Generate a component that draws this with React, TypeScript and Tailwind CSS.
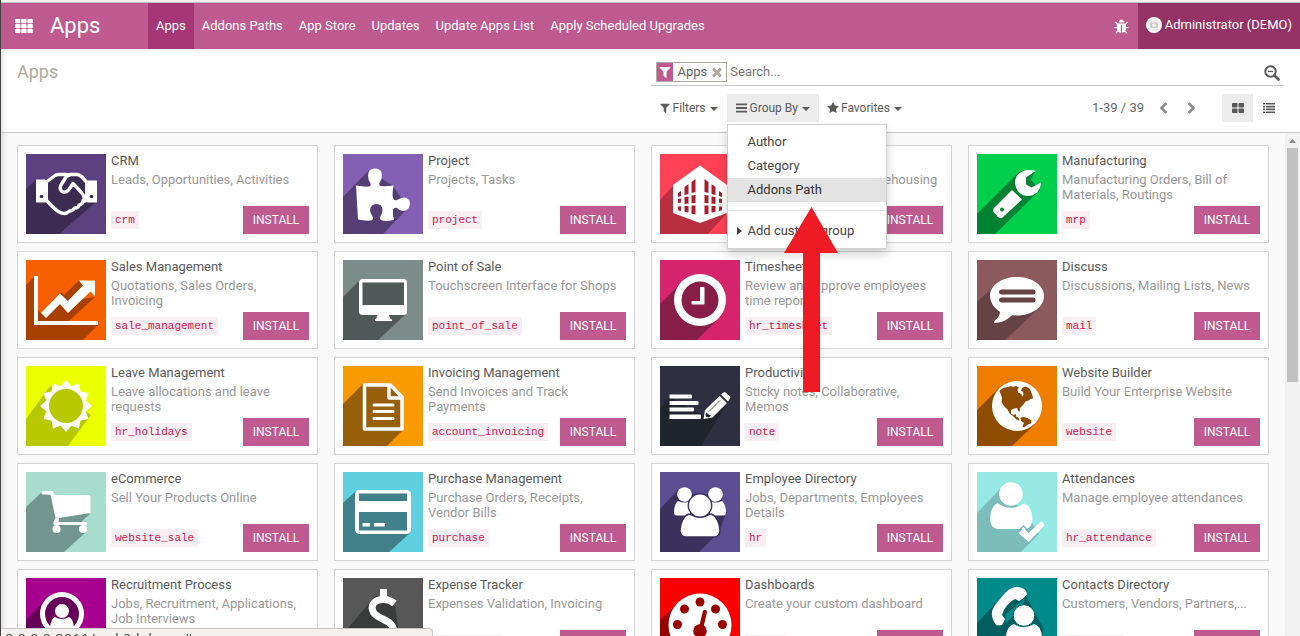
import React from "react";

type Art = { bg: string; dark: string; shadow: string; draw: (dark: string) => React.ReactNode };

const sunPoints = Array.from({ length: 24 }, (_, i) => {
  const r = i % 2 === 0 ? 26 : 20.5;
  const a = (i * Math.PI) / 12 - Math.PI / 2;
  return `${(40 + r * Math.cos(a)).toFixed(2)},${(40 + r * Math.sin(a)).toFixed(2)}`;
}).join(" ");

const art: Record<string, Art> = {
  crm: {
    bg: "#5c4080",
    dark: "#3c2c52",
    shadow: "0,35 11,25 22,26 31,20 54,20 70,48 33,80 0,80",
    draw: (d) => (
      <>
        <path d="M10 25.5h9l3 1v21l-3 1h-9zM71 26.5h-9l-3 1v20l3 1h9z" />
        <g fill="none" stroke="#fff" strokeWidth="3.4" strokeLinejoin="round" strokeLinecap="round">
          <path d="M21 27.500 28.500 22q1.500-1.500 4-1.500h7q2 0 3 1M21 47l5.500 5.500Q33 59.500 38 59.500q3 0 5.500-2.500 3.500 0 5-3 4 0 4.500-3 4-.5 4-4.500" />
          <path d="M60 27.500 55.500 22.500q-2-2-4.500-2h-6q-3 0-5 2.500l-5 8q-2 4 1 6.500 4 2 7-2l4-6q5 5 10 11 1.500 2.500 1 6.500L60 46.500" />
        </g>
        <circle cx="15.500" cy="42.500" r="1.800" fill={d} />
        <circle cx="65.500" cy="42.500" r="1.800" fill={d} />
      </>
    ),
  },
  project: {
    bg: "#8460b5",
    dark: "#553e73",
    shadow: "0,43 26,16 50,32 65,54 40,80 0,80",
    draw: () => (
      <path d="M13 31.500q8 1.500 13 1 2.500-.5 1.500-3-2.500-4-2.500-8 0-7 7-7t7 7q0 4-2.500 7.500-1 2.500 1.500 3 5 .5 12.500-.5-1.500 8-.5 12.500 1 3 4 2 3.500-2.500 7-2.500 6 .5 6 6.500-1 7-7 7-3.500 0-6-3-3-1-4 1.500-.5 5 1 10.500-8 1.500-12 .5-3-1-1.500-4.500 2-3 2-6 0-6-6-6t-6.500 6q0 3 2.500 6.500 1.500 3-1.500 4-6 .5-13-1z" />
    ),
  },
  stock: {
    bg: "#ff4156",
    dark: "#b8303f",
    shadow: "0,46 13,32 40,12 67,59 48,80 0,80",
    draw: () => (
      <>
        <path d="M40 11.500 67 31v28L40 69 13 59V31z" />
        <g fill="#a81c30">
          <path d="M18 39l3-2v5l-3 1zM24.500 33l4-3v10l-4 1zM31.500 28l4-3v13l-4 1z" />
          <path d="M18 45l3-.5v4l-3 .5zM24.500 43l4-.5v7l-4 .5zM31.500 41.500l4-.5v8l-4 .3z" />
          <path d="M18 52.500h3v4.500l-3-.8zM24.500 52h4v6.500l-4-.8zM31.500 51.500h4v9l-4-.8z" />
          <path d="M62 39l-3-2v5l3 1zM55.500 33l-4-3v10l4 1zM48.500 28l-4-3v13l4 1z" />
          <path d="M62 45l-3-.5v4l3 .5zM55.500 43l-4-.5v7l4 .5zM48.500 41.500l-4-.5v8l4 .3z" />
          <path d="M62 52.500h-3v4.500l3-.8zM55.500 52h-4v6.500l4-.8zM48.500 51.500h-4v9l4-.8z" />
        </g>
      </>
    ),
  },
  mrp: {
    bg: "#00cf4c",
    dark: "#008333",
    shadow: "0,60 42,18 50,16 58,17 54,26 63,36 18,80 0,80",
    draw: (d) => (
      <>
        <path d="M58.500 17q-4-1.500-9-1Q37.500 19 38 29.500q1.500 11 12 12.500 12.500 0 14-13.500L54.500 33.500 49 30.500V23.500z" />
        <path d="M35 36l10 9.500L25.500 63.500q-2.500 1.500-4.500-.5L17 58.500q-2-2 0-4.500z" />
        <circle cx="25" cy="55.500" r="2" fill={d} />
      </>
    ),
  },
  sale: {
    bg: "#f76000",
    dark: "#a84000",
    shadow: "0,25 8,17 12,17 12,61 72,65 57,80 0,80",
    draw: (d) => (
      <>
        <path fill={d} d="M12 50l3 3 19-19.500L53 20.500l4 5L42 41l27-4-26 24H12z" />
        <path fill="#f76000" d="M12 17v33l22-20 4 5 15-14.500V16z" />
        <path d="M8 16h4v45h60v4H8z" />
        <path d="M15 53l19-19.500 8 7.500L57 25.500l-4-5h16V36l-4.500-4.500L42 53l-8-9-14 14z" />
      </>
    ),
  },
  pos: {
    bg: "#7c8c8b",
    dark: "#4f5958",
    shadow: "0,37 17,20 63,54 35,80 0,80",
    draw: (d) => (
      <>
        <rect x="16" y="19" width="48" height="36" rx="3.500" />
        <rect x="19.500" y="22.500" width="41.500" height="22.500" fill={d} />
        <path d="M34 55h12l1 3.500 2 1V61H32v-1.500l1.500-1z" />
      </>
    ),
  },
  timesheet: {
    bg: "#d6246c",
    dark: "#871e48",
    shadow: "0,44 22,22 59,58 37,80 0,80",
    draw: (d) => (
      <>
        <circle cx="40" cy="40" r="26" />
        <circle cx="40" cy="40" r="18.500" fill={d} />
        <path d="M41 27h2.500q1 0 1 1v15.500q0 1-1 1H32.500q-1 0-1-1V42q0-1 1-1H40V28q0-1 1-1z" />
      </>
    ),
  },
  discuss: {
    bg: "#8c5a5c",
    dark: "#654243",
    shadow: "0,42 17,26 62,48 28,80 0,80",
    draw: (d) => (
      <>
        <path d="M40 17c15 0 27 8 27 19S55 55.500 40 55.500l-5-.3Q29 62 18 63q-2-.5 0-2.500 5-4 5-8.500Q13 45 13 36c0-11 12-19 27-19z" />
        <rect x="22" y="29.500" width="36.500" height="5" rx="2.500" fill={d} />
        <rect x="22" y="37.500" width="36.500" height="5" rx="2.500" fill={d} />
      </>
    ),
  },
  leave: {
    bg: "#ecff00",
    dark: "#b8c800",
    shadow: "0,53 24,20 65,49 42,80 0,80",
    draw: (d) => (
      <>
        <polygon points={sunPoints} />
        <circle cx="40" cy="40" r="17" fill={d} />
      </>
    ),
  },
  invoice: {
    bg: "#f99b00",
    dark: "#985f0b",
    shadow: "0,38 20,18 48,18 60,30 60,64 44,80 0,80",
    draw: () => (
      <g fill="none" stroke="#fff" strokeWidth="3.500" strokeLinejoin="round">
        <path d="M21.500 19h26L59 31v32H21.500zM46 19v13h13" />
        <path d="M31 39h19M31 45.500h19M31 52.500h19" strokeWidth="3" strokeLinecap="round" />
      </g>
    ),
  },
  note: {
    bg: "#2f2f42",
    dark: "#20242c",
    shadow: "0,42 10,31 44,50 70,33 41,80 0,80",
    draw: (d) => (
      <>
        <path d="M9.500 28.500H31q1 0 1 1v2q0 1-1 1H9.500zM9.500 35h28q1 0 1 1v2q0 1-1 1h-28zM9.500 41.500H33q1 0 1 1v2q0 1-1 1H9.500zM9.500 48.500H40q1 0 1 1V52q0 1-1 1H9.500z" />
        <path d="M43.500 53l1.500-9 14.500-14 7.500 7-14.500 14.500zM61 28.500l2.500-2q1-.8 2 0l4.500 4q1 1 0 2l-2 3z" />
        <path d="M49 45.500L60 34.500" stroke={d} strokeWidth=".8" />
        <path d="M46.500 46.500l2 2 2.500 1-2.500 2-2.500-1-.5-2z" fill={d} />
      </>
    ),
  },
  website: {
    bg: "#ef7d00",
    dark: "#8e4c00",
    shadow: "0,44 22,22 58,58 35,80 0,80",
    draw: (d) => (
      <>
        <circle cx="40" cy="40" r="25" />
        <path
          fill={d}
          d="M22.500 25l3.500-3 5-1 3-1 2 1 3-1 3 1.500-1.500 2 .5 3 3.500 1.500.5 2.500 1.500-1.500-.5-3-2-1.500 1-2.500 3-1.500 4 1.500 2 3.500 1.500 4 .5 3-2.500.5-2 1.500-3 1-2 3-3.500 3.500-.5 4-1.500-1.500-1-2.500-3 .5-3 1.500 0 3.500 2.500 1.500 2.500-1 0 2.500 2.500 1 1 3-3-1-3.500-3.500-3.500-2.500-2-4-3.500-3.500-2.500-4 .5-4.500z"
        />
        <path fill={d} d="M43.500 51.500l3-.5 4 1 4 2.500-.5 3-3 1-4 3-1.500-1 1.500-3.500-3-2z" />
      </>
    ),
  },
  cart: {
    bg: "#a8dccf",
    dark: "#739790",
    shadow: "0,35 16,20 26,24 64,42 56,49 60,60 38,80 0,80",
    draw: () => (
      <>
        <path d="M17 19h9q1.500 0 1.500 1.500L28 23h35q1.500 0 1.500 1.500V41L33 46l-.5 4h27q1.500 0 1.500 1.800T59.500 53H29q-2 0-1.500-3l2-4L24.500 22.500H17q-1.500 0-1.500-1.700T17 19z" />
        <circle cx="30.500" cy="57" r="4" />
        <circle cx="57" cy="57" r="4" />
      </>
    ),
  },
  purchase: {
    bg: "#60cfdf",
    dark: "#418089",
    shadow: "0,31 13,19 67,61 46,80 0,80",
    draw: (d) => (
      <>
        <rect x="12" y="18" width="56" height="44" rx="4.500" />
        <rect x="16" y="21.500" width="48" height="7.500" fill={d} />
        <rect x="16" y="40" width="48" height="18.500" fill={d} />
        <rect x="19.500" y="51" width="7.500" height="3.500" />
        <rect x="31" y="51" width="11" height="3.500" />
      </>
    ),
  },
  employees: {
    bg: "#5a4d91",
    dark: "#3a325d",
    shadow: "0,37 19,17 40,24 60,19 65,44 59,60 39,80 0,80",
    draw: (d) => (
      <>
        <circle cx="24.500" cy="22.500" r="7.300" />
        <circle cx="55.500" cy="22.500" r="7.300" />
        <path d="M18 29q6.500 3 12 0v14.500H16.500q-3-.5-2.500-4 .5-8 4-10.500zM62 29q-6.500 3-12 0v14.500h13.500q3-.5 2.500-4-.5-8-4-10.500z" />
        <g stroke={d} strokeWidth="1.400">
          <path d="M29 42q11 6 22 0 8 2.500 9 17-.5 6-6 6H26q-5.500 0-6-6 1-14.500 9-17z" />
          <circle cx="40" cy="33.500" r="11.700" />
        </g>
      </>
    ),
  },
  attendance: {
    bg: "#96e8e4",
    dark: "#7cbdbb",
    shadow: "0,41 24,16 52,46 62,62 44,80 0,80",
    draw: (d) => (
      <>
        <circle cx="34" cy="22" r="11.800" />
        <path d="M21 31.500Q34 40 47 31.500q8 2.500 8.500 16-.5 9-7.500 9.500H21q-7-.5-8-9 .5-14 8-17z" />
        <path d="M40.500 60l6-6 5 5 5-5" fill="none" stroke={d} strokeWidth="1.500" />
        <path d="M41.500 61l5-5 5 5L63.500 50q1-.8 2 0l1.500 2q.8 1 0 2L51.500 70z" />
      </>
    ),
  },
  recruit: {
    bg: "#a8008e",
    dark: "#660057",
    shadow: "0,42 20,21 60,60 40,80 0,80",
    draw: (d) => (
      <>
        <circle cx="36" cy="36" r="22" />
        <circle cx="36" cy="36" r="17" fill={d} />
        <circle cx="36" cy="33" r="7" />
        <path d="M29 39q7 4 14 0 4 1.500 5 10-12 8-24 0 1-8.500 5-10z" />
      </>
    ),
  },
  expense: {
    bg: "#575757",
    dark: "#3a3c3b",
    shadow: "0,56 33,17 52,28 57,62 40,80 0,80",
    draw: () => (
      <g fill="none" stroke="#fff" strokeWidth="7">
        <path d="M51.500 25.500Q46 21 40 21.500c-8 0-12 5-10.500 10.500C31 39 40 40 46 44.500c7 5.500 6 16-4 17-7 .5-12-2-15-5" />
        <path d="M40.500 11v10M40.500 61v8" />
      </g>
    ),
  },
  dashboard: {
    bg: "#f80000",
    dark: "#990000",
    shadow: "0,42 18,25 62,69 50,80 0,80",
    draw: (d) => (
      <>
        <circle cx="40" cy="47" r="31.500" />
        <g fill={d}>
          <circle cx="40" cy="24" r="4.500" />
          <circle cx="24.500" cy="31" r="4.500" />
          <circle cx="55.500" cy="31" r="4.500" />
          <circle cx="17.500" cy="46.500" r="4.500" />
          <circle cx="62.500" cy="46.500" r="4.500" />
          <circle cx="40" cy="53" r="6.800" />
          <path d="M43 33q.5-1.500 2.500-1 1.500.5 1.500 2L42.500 53H38z" />
        </g>
      </>
    ),
  },
  contacts: {
    bg: "#008b8a",
    dark: "#005e5e",
    shadow: "0,45 19,25 48,16 66,50 66,80 0,80",
    draw: (d) => (
      <>
        <path d="M28 37L48 20l-2 8-17 17z" fill="#008b8a" />
        <path d="M50 16.500L49 13q-3-4-9-4Q33 9.500 28 15L18 27q-4 6-3 11 1 6 5 9.500l5-.5q2-3 3-6l-3-4q1-5 5-9.500 4-5 8-6.500l4 2q4-1.500 8-6.500z" />
        <circle cx="47" cy="37.500" r="10.800" stroke={d} strokeWidth="1" />
        <path d="M37 46q10 6.500 20 0 7 2 8 12v22H29V58q1-10 8-12z" />
      </>
    ),
  },
};

const apps: [string, string, string, string][] = [
  ["crm", "CRM", "Leads, Opportunities, Activities", "crm"],
  ["project", "Project", "Projects, Tasks", "project"],
  ["stock", "Inventory Management", "Inventory, Logistics, Warehousing", "stock"],
  ["mrp", "Manufacturing", "Manufacturing Orders, Bill of Materials, Routings", "mrp"],
  ["sale", "Sales Management", "Quotations, Sales Orders, Invoicing", "sale_management"],
  ["pos", "Point of Sale", "Touchscreen Interface for Shops", "point_of_sale"],
  ["timesheet", "Timesheets", "Review and approve employees time reports", "hr_timesheet"],
  ["discuss", "Discuss", "Discussions, Mailing Lists, News", "mail"],
  ["leave", "Leave Management", "Leave allocations and leave requests", "hr_holidays"],
  ["invoice", "Invoicing Management", "Send Invoices and Track Payments", "account_invoicing"],
  ["note", "Productivity", "Sticky notes, Collaborative, Memos", "note"],
  ["website", "Website Builder", "Build Your Enterprise Website", "website"],
  ["cart", "eCommerce", "Sell Your Products Online", "website_sale"],
  ["purchase", "Purchase Management", "Purchase Orders, Receipts, Vendor Bills", "purchase"],
  ["employees", "Employee Directory", "Jobs, Departments, Employees Details", "hr"],
  ["attendance", "Attendances", "Manage employee attendances", "hr_attendance"],
  ["recruit", "Recruitment Process", "Jobs, Recruitment, Applications, Job Interviews", "hr_recruitment"],
  ["expense", "Expense Tracker", "Expenses Validation, Invoicing", "hr_expense"],
  ["dashboard", "Dashboards", "Create your custom dashboard", "board"],
  ["contacts", "Contacts Directory", "Customers, Vendors, Partners,...", "contacts"],
];

function AppIcon({ name }: { name: string }) {
  const a = art[name];
  return (
    <svg viewBox="0 0 80 80" className="size-20 shrink-0" fill="#fff" aria-hidden="true">
      <rect width="80" height="80" fill={a.bg} />
      <polygon points={a.shadow} fill={a.dark} />
      {a.draw(a.dark)}
    </svg>
  );
}

function AppCard({ icon, title, text, code }: { icon: string; title: string; text: string; code: string }) {
  return (
    <article className="flex gap-[5px] border border-[#d5d5d5] bg-white p-2">
      <AppIcon name={icon} />
      <div className="flex min-w-0 grow flex-col">
        <h2 className="leading-[14px] text-[#5a5a5a]">{title}</h2>
        <p className="mt-1 pr-1 leading-[15px] text-[#999]">{text}</p>
        <div className="mt-auto flex items-center justify-between">
          <code className="bg-[#f9eff3] px-1 font-['Liberation_Mono',monospace] text-[11px] leading-[18px] text-[#d6134f]">
            {code}
          </code>
          <button className="h-7 w-[66px] shrink-0 bg-[#be5a8f] text-xs text-white">INSTALL</button>
        </div>
      </div>
    </article>
  );
}

const FILTER =
  "M1595 295q17 41-14 70l-493 493v742q0 42-39 59-13 5-25 5-27 0-45-19l-256-256q-19-19-19-45v-486l-493-493q-31-29-14-70 17-39 59-39h1280q42 0 59 39z";
const STAR =
  "M1728 647q0 22-26 48l-363 354 86 500q1 7 1 20 0 21-10.5 35.500t-30.500 14.500q-19 0-40-12l-449-236-449 236q-22 12-40 12-21 0-31.500-14.500t-10.500-35.500q0-6 2-20l86-500-364-354q-25-27-25-48 0-37 56-46l502-73 225-455q19-41 49-41t49 41l225 455 502 73q56 9 56 46z";
const TIMES =
  "M1490 1322q0 40-28 68l-136 136q-28 28-68 28t-68-28l-294-294-294 294q-28 28-68 28t-68-28l-136-136q-28-28-28-68t28-68l294-294-294-294q-28-28-28-68t28-68l136-136q28-28 68-28t68 28l294 294 294-294q28-28 68-28t68 28l136 136q28 28 28 68t-28 68l-294 294 294 294q28 28 28 68z";
const BUG =
  "M1632 960q0 26-19 45t-45 19h-224q0 171-67 290l208 209q19 19 19 45t-19 45q-18 19-45 19t-45-19l-198-197q-5 5-15 13t-42 28.500-65 36.500-82 29-97 13v-896h-128v896q-51 0-101.500-13.500t-87-33-66-39-43.500-32.500l-15-14-183 207q-20 21-48 21-24 0-43-16-19-18-20.500-44.500t15.500-46.500l202-227q-58-114-58-274h-224q-26 0-45-19t-19-45 19-45 45-19h224v-294l-173-173q-19-19-19-45t19-45 45-19 45 19l173 173h844l173-173q19-19 45-19t45 19 19 45-19 45l-173 173v294h224q26 0 45 19t19 45zm-480-576h-640q0-133 93.500-226.500t226.500-93.500 226.500 93.500 93.500 226.500z";

function Glyph({ d, className }: { d: string; className: string }) {
  return (
    <svg viewBox="0 0 1792 1792" fill="currentColor" className={className} aria-hidden="true">
      <path d={d} />
    </svg>
  );
}

function Caret() {
  return (
    <svg viewBox="0 0 8 4" fill="currentColor" className="ml-1 mt-0.5 h-1 w-2" aria-hidden="true">
      <path d="M0 0h8L4 4z" />
    </svg>
  );
}

const navItems = ["Apps", "Addons Paths", "App Store", "Updates", "Update Apps List", "Apply Scheduled Upgrades"];
const groups = ["Author", "Category", "Addons Path"];

export default function App() {
  return (
    <div className="flex h-screen flex-col overflow-hidden border-l border-[#45423d] bg-white font-[Roboto,sans-serif] text-[13px] text-[#5a5a5a]">
      <div className="h-[3px] shrink-0 border-b border-[#c3c1bf] bg-[#f2f1f0]" />
      <header className="flex h-[46px] shrink-0 items-stretch bg-[#be5a8f] text-white">
        <button className="flex items-center pl-3.5" aria-label="Applications">
          <svg viewBox="0 0 18 14" fill="currentColor" className="h-3.5 w-[18px]">
            {[0, 5, 10].map((y) =>
              [0, 6.2, 12.4].map((x) => <rect key={`${x}-${y}`} x={x} y={y} width="5.400" height="4.200" rx=".8" />),
            )}
          </svg>
        </button>
        <h1 className="w-[115px] pl-[17px] text-[22px] leading-[46px]">Apps</h1>
        <nav className="flex grow">
          {navItems.map((item, i) => (
            <a
              key={item}
              href="#"
              className={i === 0 ? "bg-[#a63776] px-2 leading-[46px]" : "px-2 leading-[46px]"}
            >
              {item}
            </a>
          ))}
        </nav>
        <button className="px-2 pt-0.5" aria-label="Debug">
          <Glyph d={BUG} className="size-4" />
        </button>
        <a href="#" className="flex items-center gap-[3px] bg-[#953366] px-2 pb-[3px]">
          <svg viewBox="0 0 16 16" className="size-4" aria-hidden="true">
            <circle cx="8" cy="8" r="8" fill="#fff" />
            <circle cx="8" cy="8" r="6.500" fill="#eee" />
            <rect x="4" y="5.500" width="8" height="5.500" rx="1" fill="#ccc" />
            <circle cx="8" cy="8.200" r="1.800" fill="#eee" />
          </svg>
          Administrator (DEMO)
        </a>
      </header>

      <section className="flex h-[84px] shrink-0 border-b border-[#c8c8c8] pl-4 pr-4 shadow-[inset_6px_0_6px_-4px_#0002]">
        <p className="w-1/2 grow pt-3 text-lg leading-[22px] text-[#b3aba0]">Apps</p>
        <div className="flex w-1/2 shrink-0 flex-col">
          <div className="flex h-[37px] items-center border-b border-[#c8c8c8] pl-[5px] pt-2.5">
            <span className="flex h-5 items-center border border-[#afa89f]">
              <span className="flex h-full w-4 items-center justify-center bg-[#be5a8f] text-white">
                <Glyph d={FILTER} className="size-[14px]" />
              </span>
              <span className="pl-[5px] pr-[3px] text-[#666]">Apps</span>
              <button className="pr-0.5 text-[#afa89f]" aria-label="Remove Apps filter">
                <Glyph d={TIMES} className="size-[14px]" />
              </button>
            </span>
            <input
              aria-label="Search"
              placeholder="Search..."
              className="min-w-0 grow pl-[3px] outline-none placeholder:text-[#777]"
            />
            <button className="pr-1 pt-0.5" aria-label="Advanced search">
              <svg viewBox="0 0 16 16" fill="none" stroke="currentColor" className="size-4">
                <circle cx="6.500" cy="6.500" r="5.200" strokeWidth="2" />
                <path d="M10.500 10.500l4 4" strokeWidth="2.600" strokeLinecap="round" />
                <path d="M4 6.500h5" strokeWidth="1.300" />
              </svg>
            </button>
          </div>
          <div className="mt-2 flex h-7 items-center">
            <button className="flex h-7 items-center pl-2 pr-[9px] text-xs">
              <Glyph d={FILTER} className="mr-0.5 size-3" />
              Filters
              <Caret />
            </button>
            <div className="relative">
              <button className="flex h-7 items-center bg-[#ececec] px-[9px] text-xs">
                <svg viewBox="0 0 12 12" fill="currentColor" className="mr-0.5 size-3" aria-hidden="true">
                  <path d="M0 1.500h11v1.800H0zM0 5.100h11v1.800H0zM0 8.700h11v1.800H0z" />
                </svg>
                Group By
                <Caret />
              </button>
              <div className="absolute left-0 top-[30px] z-10 w-40 border border-[#d0d0d0] bg-white py-[5px] text-[#444] shadow-[0_5px_10px_rgba(0,0,0,0.18)]">
                {groups.map((g) => (
                  <a
                    key={g}
                    href="#"
                    className={g === "Addons Path" ? "block bg-[#e3e3e3] pl-5 leading-6 text-[#333]" : "block pl-5 leading-6"}
                  >
                    {g}
                  </a>
                ))}
                <hr className="my-2 border-[#e0e0e0]" />
                <a href="#" className="flex items-center pl-[9px] leading-6">
                  <svg viewBox="0 0 5 8" fill="currentColor" className="mr-1.5 h-2 w-[5px]" aria-hidden="true">
                    <path d="M0 0l5 4-5 4z" />
                  </svg>
                  Add custom group
                </a>
              </div>
              <svg
                viewBox="0 0 54 186"
                className="pointer-events-none absolute left-[57px] top-[113px] z-20 h-[186px] w-[54px] max-w-none"
                aria-hidden="true"
              >
                <path d="M27.500 0L54 46H36v139H19V46H0z" fill="#ee1b24" />
              </svg>
            </div>
            <button className="flex h-7 items-center px-2 text-xs">
              <Glyph d={STAR} className="mr-0.5 size-3" />
              Favorites
              <Caret />
            </button>
            <span className="ml-auto text-[#666]">1-39 / 39</span>
            <button className="ml-[15px] text-[#8c8c8c]" aria-label="Previous page">
              <svg viewBox="0 0 10 12" fill="none" stroke="currentColor" strokeWidth="2.600" className="h-3 w-2.5">
                <path d="M7.500 1L2.500 6l5 5" />
              </svg>
            </button>
            <button className="ml-[17px] text-[#8c8c8c]" aria-label="Next page">
              <svg viewBox="0 0 10 12" fill="none" stroke="currentColor" strokeWidth="2.600" className="h-3 w-2.5">
                <path d="M2.500 1l5 5-5 5" />
              </svg>
            </button>
            <button className="ml-[26px] flex h-7 w-[31px] items-center justify-center bg-[#ececec]" aria-label="Kanban view">
              <svg viewBox="0 0 12 10" fill="currentColor" className="h-2.5 w-3">
                <rect width="5.500" height="4.500" rx=".8" />
                <rect x="6.500" width="5.500" height="4.500" rx=".8" />
                <rect y="5.500" width="5.500" height="4.500" rx=".8" />
                <rect x="6.500" y="5.500" width="5.500" height="4.500" rx=".8" />
              </svg>
            </button>
            <button className="flex h-7 w-[31px] items-center justify-center" aria-label="List view">
              <svg viewBox="0 0 12 10" fill="currentColor" className="h-2.5 w-3">
                <path d="M0 0h2v1.600H0zM3 0h9v1.600H3zM0 2.800h2v1.600H0zM3 2.800h9v1.600H3zM0 5.600h2v1.600H0zM3 5.600h9v1.600H3zM0 8.400h2V10H0zM3 8.400h9V10H3z" />
              </svg>
            </button>
          </div>
        </div>
      </section>

      <div className="flex min-h-0 grow bg-[#f9f9f9] shadow-[inset_6px_0_6px_-4px_#0002]">
        <main className="min-w-0 grow overflow-hidden px-4 pt-3">
          <div className="grid grid-cols-4 gap-x-4 gap-y-2">
            {apps.map(([icon, title, text, code]) => (
              <AppCard key={icon} icon={icon} title={title} text={text} code={code} />
            ))}
          </div>
        </main>
        <div className="flex w-[15px] shrink-0 flex-col items-center bg-[#f1f1f1] pt-1.5" aria-hidden="true">
          <svg viewBox="0 0 7 4" fill="#8a8a8a" className="h-1 w-[7px]">
            <path d="M0 4h7L3.500 0z" />
          </svg>
          <div className="mt-[5px] h-[47%] w-[11px] bg-[#c1c1c1]" />
        </div>
      </div>

      <div className="fixed bottom-0 left-px z-20 h-2 w-[432px] overflow-hidden rounded-tr border-r border-t border-[#c9c7c5] bg-[#f2f1f0] pl-1 font-['Open_Sans',sans-serif] text-[15px] leading-[18px] text-[#4c4c4c]">
        0.0.0.0:8011/web?debug=#
      </div>
    </div>
  );
}
